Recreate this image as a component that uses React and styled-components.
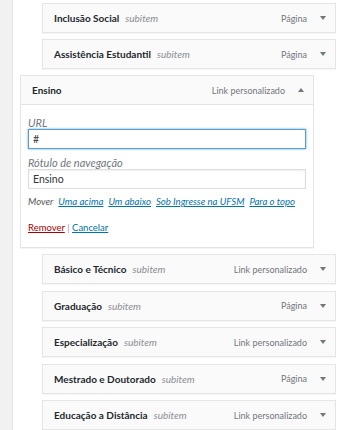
import React from 'react';
import styled, { createGlobalStyle } from 'styled-components';

const GlobalStyle = createGlobalStyle`
  html, body {
    margin: 0;
    padding: 0;
    background: #fff;
  }
  body {
    font-family: Lato, "Open Sans", sans-serif;
    font-size: 10px;
    color: #23282d;
  }
`;

const Page = styled.div`
  display: flex;
  width: 352px;
  height: 430px;
  overflow: hidden;
`;

const SideStrip = styled.div`
  width: 12px;
  flex: none;
  background: #f1f1f1;
  border-right: 1px solid #e5e5e5;
`;

const MenuList = styled.ul`
  list-style: none;
  margin: 0;
  padding: 3px 0 0 0;
  flex: 1;
`;

const MenuItem = styled.li`
  width: 294px;
  margin: 0 0 ${(p) => p.$gap || 6}px ${(p) => (p.$depth ? 29 : 7)}px;
  box-sizing: border-box;
`;

const Handle = styled.div`
  display: flex;
  align-items: center;
  height: 30px;
  box-sizing: border-box;
  padding: 0 9px 0 11px;
  background: #fafafa;
  border: 1px solid #e5e5e5;
  box-shadow: 0 1px 1px rgba(0, 0, 0, 0.04);
`;

const Title = styled.span`
  font-weight: 700;
  color: #23282d;
  white-space: nowrap;
`;

const SubLabel = styled.span`
  margin-left: 6px;
  font-style: italic;
  color: #8a8f94;
`;

const ItemType = styled.span`
  margin-left: auto;
  font-size: 9px;
  color: #72777c;
  white-space: nowrap;
`;

const Toggle = styled.span`
  display: flex;
  align-items: center;
  justify-content: center;
  width: 6px;
  margin-left: 13px;
  color: #72777c;
`;

const Settings = styled.div`
  border: 1px solid #e5e5e5;
  border-top: none;
  background: #fff;
  padding: 11px 7px 12px 7px;
  box-shadow: 0 1px 1px rgba(0, 0, 0, 0.04);
`;

const FieldLabel = styled.label`
  display: block;
  height: 13px;
  line-height: 13px;
  font-size: 11px;
  font-style: italic;
  color: #72777c;
  margin-top: ${(p) => (p.$first ? 0 : 7)}px;
`;

const TextInput = styled.input`
  display: block;
  width: 100%;
  height: 20px;
  box-sizing: border-box;
  margin: 0;
  padding: 0 4px;
  font-family: inherit;
  font-size: 10.5px;
  color: #32373c;
  background: #fff;
  border: 1px solid ${(p) => (p.$focused ? '#5b9dd9' : '#ddd')};
  box-shadow: ${(p) =>
    p.$focused ? '0 0 2px rgba(30, 140, 190, 0.8)' : 'inset 0 1px 2px rgba(0, 0, 0, 0.07)'};
  outline: none;
`;

const MoveRow = styled.div`
  display: flex;
  gap: 5px;
  margin-top: 6px;
  line-height: 14px;
  font-size: 9.6px;
  font-style: italic;
  color: #555;
  white-space: nowrap;
`;

const Link = styled.a`
  color: ${(p) => (p.$danger ? '#a00' : '#0073aa')};
  text-decoration: underline;
  cursor: pointer;
`;

const Actions = styled.div`
  margin-top: 12px;
  line-height: 14px;
  font-size: 9.5px;
  color: #999;
`;

const Caret = ({ up }) => (
  <svg width="6" height="4" viewBox="0 0 6 4">
    <polygon points={up ? '0,4 6,4 3,0' : '0,0 6,0 3,4'} fill="currentColor" />
  </svg>
);

const topItems = [
  { title: 'Inclusão Social', type: 'Página' },
  { title: 'Assistência Estudantil', type: 'Página' },
];

const bottomItems = [
  { title: 'Básico e Técnico', type: 'Link personalizado' },
  { title: 'Graduação', type: 'Página' },
  { title: 'Especialização', type: 'Link personalizado' },
  { title: 'Mestrado e Doutorado', type: 'Página' },
  { title: 'Educação a Distância', type: 'Link personalizado' },
];

const SubItem = ({ title, type, gap }) => (
  <MenuItem $depth={1} $gap={gap}>
    <Handle>
      <Title>{title}</Title>
      <SubLabel>subitem</SubLabel>
      <ItemType>{type}</ItemType>
      <Toggle>
        <Caret />
      </Toggle>
    </Handle>
  </MenuItem>
);

export default function App() {
  return (
    <Page>
      <GlobalStyle />
      <SideStrip />
      <MenuList>
        {topItems.map((it) => (
          <SubItem key={it.title} {...it} />
        ))}
        <MenuItem $depth={0}>
          <Handle>
            <Title>Ensino</Title>
            <ItemType>Link personalizado</ItemType>
            <Toggle>
              <Caret up />
            </Toggle>
          </Handle>
          <Settings>
            <FieldLabel $first>URL</FieldLabel>
            <TextInput $focused defaultValue="#" />
            <FieldLabel>Rótulo de navegação</FieldLabel>
            <TextInput defaultValue="Ensino" />
            <MoveRow>
              <span>Mover</span>
              <Link>Uma acima</Link>
              <Link>Um abaixo</Link>
              <Link>Sob Ingresse na UFSM</Link>
              <Link>Para o topo</Link>
            </MoveRow>
            <Actions>
              <Link $danger>Remover</Link> | <Link>Cancelar</Link>
            </Actions>
          </Settings>
        </MenuItem>
        {bottomItems.map((it) => (
          <SubItem key={it.title} {...it} gap={6.5} />
        ))}
      </MenuList>
    </Page>
  );
}
